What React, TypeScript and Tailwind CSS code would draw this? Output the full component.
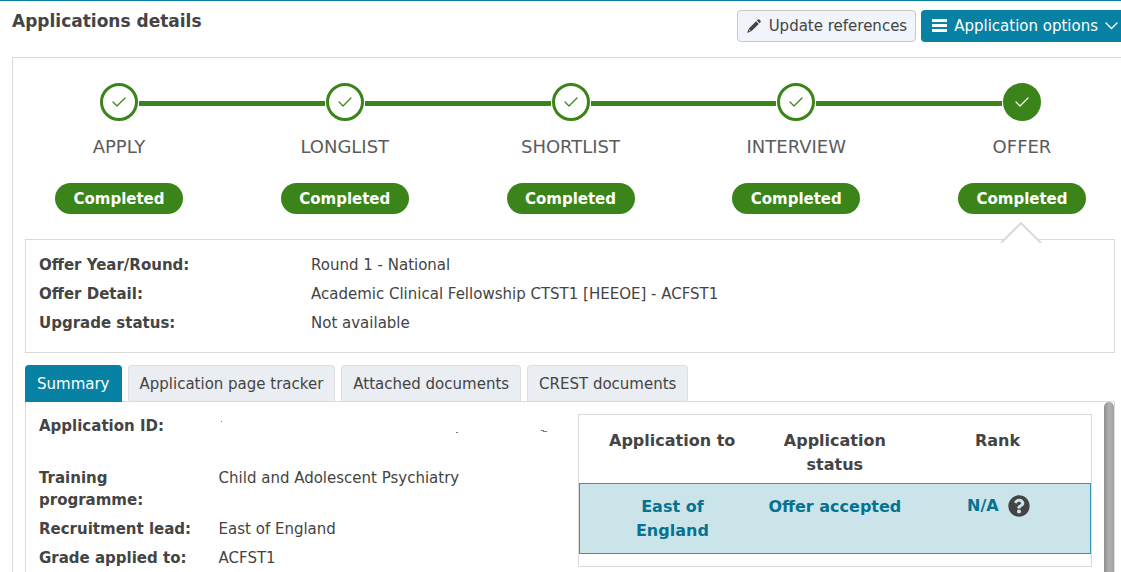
import { useState } from "react";
import { FaQuestionCircle } from "react-icons/fa";

type Step = { name: string; status: string };
type Detail = { label: string; value: string };

const steps: Step[] = [
  { name: "APPLY", status: "Completed" },
  { name: "LONGLIST", status: "Completed" },
  { name: "SHORTLIST", status: "Completed" },
  { name: "INTERVIEW", status: "Completed" },
  { name: "OFFER", status: "Completed" },
];

const offer: Detail[] = [
  { label: "Offer Year/Round:", value: "Round 1 - National" },
  { label: "Offer Detail:", value: "Academic Clinical Fellowship CTST1 [HEEOE] - ACFST1" },
  { label: "Upgrade status:", value: "Not available" },
];

const summary: Detail[] = [
  { label: "Application ID:", value: "" },
  { label: "Training programme:", value: "Child and Adolescent Psychiatry" },
  { label: "Recruitment lead:", value: "East of England" },
  { label: "Grade applied to:", value: "ACFST1" },
];

const tabs = ["Summary", "Application page tracker", "Attached documents", "CREST documents"];

function Check() {
  return (
    <svg viewBox="0 0 14 10" className="h-[10px] w-[14px]" fill="none" stroke="currentColor" strokeWidth="1.2" strokeLinecap="round" strokeLinejoin="round" aria-hidden="true">
      <path d="M1 5 5 9 13 1" />
    </svg>
  );
}

// what is left of a blanked-out value
function Erased() {
  return (
    <svg viewBox="0 0 340 22" className="h-[22px] w-[340px]" fill="#777" aria-hidden="true">
      <path d="M2 6h1v1h-1zM237 17h2v1h-2zM322 15h3v1h-3zM324 16h4v1h-4z" />
    </svg>
  );
}

function Progress({ current }: { current: number }) {
  return (
    <div className="pr-[29px] pl-[30px]">
      <div className="flex items-start px-[45px]">
        {steps.map((s, i) => (
          <div key={s.name} className={i === 0 ? "flex" : "flex flex-1"}>
            {i > 0 && <div className="mx-px mt-[18px] h-[5px] flex-1 bg-[#3b8419]" />}
            <div className={`flex size-[38px] items-center justify-center rounded-full border-3 border-[#3b8419] ${i === current ? "bg-[#3b8419] text-white" : "bg-white text-[#3b8419]"}`}>
              <Check />
            </div>
          </div>
        ))}
      </div>
      <ol className="mt-[13px] flex justify-between">
        {steps.map(s => (
          <li key={s.name} className="flex w-32 flex-col items-center">
            <span className="text-lg leading-[26px] text-[#5c5c5c]">{s.name}</span>
            <span className="mt-[23px] w-full rounded-full bg-[#3b8419] pt-px text-center leading-[30px] font-bold text-white">{s.status}</span>
          </li>
        ))}
      </ol>
    </div>
  );
}

export default function App() {
  const [tab, setTab] = useState(tabs[0]);

  return (
    <div className="flex min-h-screen flex-col overflow-hidden border-t border-[#0781a4] bg-white font-['Verdana','DejaVu_Sans',sans-serif] text-[15px] leading-[22px] text-[#444]">
      <header className="flex items-start justify-between pl-3">
        <h1 className="mt-2 text-[17px] leading-6 font-bold">Applications details</h1>
        <div className="mt-[9px] flex gap-[5px]">
          <button type="button" className="flex h-8 items-center gap-2 rounded border border-[#c8c8c8] bg-[#f1f4fa] pr-2 pl-[9px] whitespace-nowrap">
            <svg viewBox="0 0 14 14" className="size-[14px]" fill="currentColor" aria-hidden="true">
              <path d="M10.800.5Q11.500-.1 12.200.5L13.500 1.800Q14.100 2.500 13.500 3.200L12.500 4.200 9.800 1.500zM9.100 2.200 11.800 4.900 4.600 12.100 0 14 1.900 9.400zM2.600 10.400 1.900 12.100 3.600 11.400z" fillRule="evenodd" />
            </svg>
            Update references
          </button>
          <button type="button" className="flex h-8 items-center gap-[7px] rounded-l bg-[#0781a4] pr-[3px] pl-[11px] whitespace-nowrap text-white">
            <svg viewBox="0 0 15 15" className="size-[15px]" fill="currentColor" aria-hidden="true">
              <path d="M0 0h15v3H0zM0 5h15v3H0zM0 10h15v3H0z" />
            </svg>
            Application options
            <svg viewBox="0 0 13 8" className="h-2 w-[13px]" fill="none" stroke="currentColor" strokeWidth="1.4" strokeLinecap="round" aria-hidden="true">
              <path d="M1 1l5.500 5.500L12 1" />
            </svg>
          </button>
        </div>
      </header>

      <main className="mt-[15px] ml-3 flex flex-1 flex-col border-t border-l border-[#dadada] pt-[25px] pr-[6px] pl-3">
        <Progress current={4} />

        <section className="relative mt-[25px] border border-[#dadada] px-[13px] pt-[14px] pb-[18px]">
          {/* pointer to the selected step */}
          <svg viewBox="0 0 42 21" className="absolute -top-[18px] right-[72px] h-[21px] w-[42px]" aria-hidden="true">
            <path d="M1 21 21 1 41 21z" fill="#fff" />
            <path d="M1 21 21 1 41 21" fill="none" stroke="#dadada" strokeWidth="2" />
          </svg>
          <dl className="flex flex-col gap-[7px]">
            {offer.map(o => (
              <div key={o.label} className="flex">
                <dt className="w-[272px] font-bold">{o.label}</dt>
                <dd className="flex-1">{o.value}</dd>
              </div>
            ))}
          </dl>
        </section>

        <div role="tablist" className="mt-3 flex gap-[6px]">
          {tabs.map(t => (
            <button
              key={t}
              type="button"
              role="tab"
              aria-selected={t === tab}
              onClick={() => setTab(t)}
              className={`rounded-t border border-b-0 px-[11px] whitespace-nowrap ${t === tab ? "relative -mb-px h-[37px] border-[#0781a4] bg-[#0781a4] text-white" : "h-9 border-[#dedfe2] bg-[#eaedf2]"}`}
            >
              {t}
            </button>
          ))}
        </div>

        <div role="tabpanel" className="flex flex-1 border border-b-0 border-[#dadada]">
          <div className="grid flex-1 grid-cols-[22fr_21fr] items-start pt-3 pr-3 pl-[13px]">
            <dl className="flex flex-col gap-[7px] pt-px">
              {summary.map(s => (
                <div key={s.label} className="flex">
                  <dt className="w-1/3 pr-4 font-bold">{s.label}</dt>
                  <dd className={s.value ? "flex-1" : "min-h-[45px] flex-1"}>{s.value || <Erased />}</dd>
                </div>
              ))}
            </dl>

            <div className="border border-[#dadada] pb-3 text-base leading-6">
              <table className="w-full table-fixed border-collapse text-center font-bold">
                <thead>
                  <tr className="align-top">
                    <th className="w-[34%] pt-[14px] pb-[6px] pr-3 pl-6">Application to</th>
                    <th className="px-3 pt-[14px] pb-[6px]">Application status</th>
                    <th className="w-[34%] pt-[14px] pb-[6px] pr-6 pl-3">Rank</th>
                  </tr>
                </thead>
                <tbody>
                  <tr className="border border-[#3596b8] bg-[#cbe4ea] align-top text-[#07728f]">
                    <td className="pt-[11px] pb-[10px] pr-3 pl-6">East of England</td>
                    <td className="pt-[11px] pb-[10px]">Offer accepted</td>
                    <td className="pt-[10px] pb-[11px] pr-[22px] pl-3">
                      <span className="flex items-center justify-center gap-[9px]">
                        N/A
                        <FaQuestionCircle className="size-[22px] text-[#444]" />
                      </span>
                    </td>
                  </tr>
                </tbody>
              </table>
            </div>
          </div>
          <div className="w-[10px] rounded-t-full bg-linear-to-r from-[#8e8e8e] via-[#b0b0b0] to-[#a2a2a2]" />
        </div>
      </main>
    </div>
  );
}
